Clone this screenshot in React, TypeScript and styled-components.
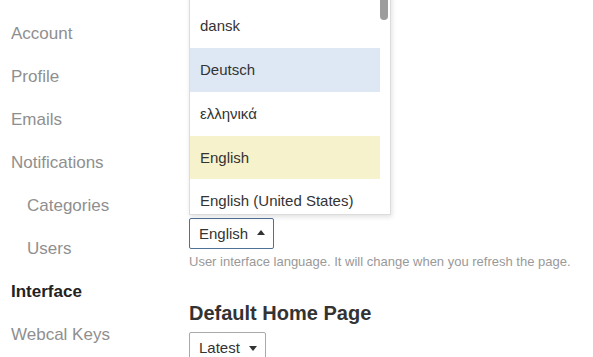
import React from "react";
import styled, { createGlobalStyle } from "styled-components";

const GlobalStyle = createGlobalStyle`
  html, body {
    margin: 0;
    padding: 0;
    background: #ffffff;
    font-family: "Liberation Sans", Arial, sans-serif;
    overflow: hidden;
  }
`;

const Page = styled.div`
  display: flex;
  width: 593px;
  height: 357px;
  overflow: hidden;
`;

const Nav = styled.nav`
  width: 189px;
  flex-shrink: 0;
  padding-top: 12px;
  box-sizing: border-box;
`;

const NavItem = styled.div<{ $indent?: boolean; $active?: boolean }>`
  height: 43px;
  line-height: 43px;
  font-size: 17px;
  padding-left: ${(p) => (p.$indent ? 27 : 11)}px;
  color: ${(p) => (p.$active ? "#222" : "#8f8f8f")};
  font-weight: ${(p) => (p.$active ? 700 : 400)};
  white-space: nowrap;
`;

const Content = styled.main`
  flex: 1;
  padding-top: 218px;
`;

const Field = styled.div`
  position: relative;
  display: inline-block;
`;

const SelectButton = styled.div<{ $focused?: boolean }>`
  display: inline-flex;
  align-items: center;
  gap: 9px;
  height: 31px;
  box-sizing: border-box;
  padding: 0 8px 0 9px;
  border: 1px solid ${(p) => (p.$focused ? "#4f7196" : "#a9a9a9")};
  border-radius: 2px;
  font-size: 15px;
  color: #333;
  background: #fff;
`;

const Caret = styled.span<{ $up?: boolean }>`
  width: 0;
  height: 0;
  border-left: 4.5px solid transparent;
  border-right: 4.5px solid transparent;
  ${(p) =>
    p.$up
      ? "border-bottom: 5px solid #333;"
      : "border-top: 5px solid #333;"}
  margin-top: ${(p) => (p.$up ? -2 : 1)}px;
`;

const Menu = styled.div`
  position: absolute;
  left: 0;
  bottom: calc(100% + 3px);
  width: 202px;
  height: 220px;
  box-sizing: border-box;
  border: 1px solid #dcdcdc;
  border-top: none;
  background: #fff;
  box-shadow: 1px 2px 5px rgba(0, 0, 0, 0.12);
  overflow: hidden;
`;

const MenuList = styled.div`
  position: absolute;
  left: 0;
  right: 10px;
  bottom: -9px;
`;

const Option = styled.div<{ $tone?: "blue" | "yellow" }>`
  height: 43.75px;
  line-height: 43.75px;
  padding-left: 10px;
  font-size: 15px;
  color: #333;
  white-space: nowrap;
  background: ${(p) =>
    p.$tone === "blue" ? "#dde8f4" : p.$tone === "yellow" ? "#f6f2cc" : "transparent"};
`;

const Thumb = styled.div`
  position: absolute;
  top: -10px;
  right: 2px;
  width: 8px;
  height: 35px;
  border-radius: 4px;
  background: #9d9d9d;
`;

const Hint = styled.div`
  margin-top: 5px;
  font-size: 13px;
  color: #999;
  white-space: nowrap;
`;

const Heading = styled.h3`
  margin: 33px 0 7px;
  font-size: 20px;
  font-weight: 700;
  color: #333;
`;

const languages: { name: string; tone?: "blue" | "yellow" }[] = [
  { name: "dansk" },
  { name: "Deutsch", tone: "blue" },
  { name: "ελληνικά" },
  { name: "English", tone: "yellow" },
  { name: "English (United States)" },
];

const navItems = [
  { label: "Account" },
  { label: "Profile" },
  { label: "Emails" },
  { label: "Notifications" },
  { label: "Categories", indent: true },
  { label: "Users", indent: true },
  { label: "Interface", active: true },
  { label: "Webcal Keys" },
];

const App: React.FC = () => {
  return (
    <>
      <GlobalStyle />
      <Page>
        <Nav>
          {navItems.map((item) => (
            <NavItem key={item.label} $indent={item.indent} $active={item.active}>
              {item.label}
            </NavItem>
          ))}
        </Nav>
        <Content>
          <Field>
            <Menu>
              <MenuList>
                {languages.map((l) => (
                  <Option key={l.name} $tone={l.tone}>
                    {l.name}
                  </Option>
                ))}
              </MenuList>
              <Thumb />
            </Menu>
            <SelectButton $focused>
              English <Caret $up />
            </SelectButton>
          </Field>
          <Hint>User interface language. It will change when you refresh the page.</Hint>
          <Heading>Default Home Page</Heading>
          <SelectButton>
            Latest <Caret />
          </SelectButton>
        </Content>
      </Page>
    </>
  );
};

export default App;
